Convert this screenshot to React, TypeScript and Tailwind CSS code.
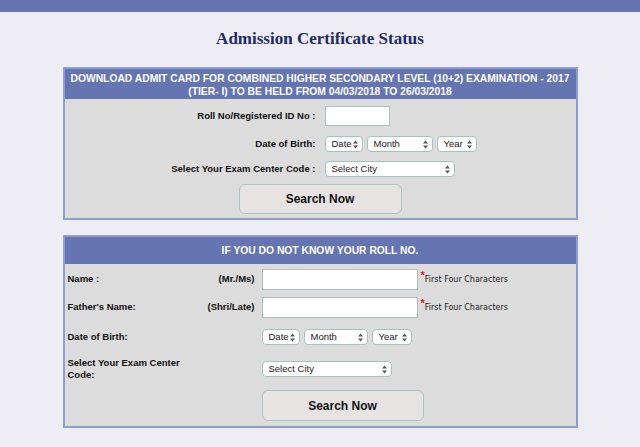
import React from "react";

function Arrows() {
  return (
    <svg width="5" height="9" viewBox="0 0 5 9" className="shrink-0">
      <polygon points="0,3.6 2.5,0.6 5,3.6" fill="#555" />
      <polygon points="0,5.4 5,5.4 2.5,8.4" fill="#555" />
    </svg>
  );
}

function Sel({ label, className }: { label: string; className: string }) {
  return (
    <div
      className={
        "flex h-[16px] items-center justify-between rounded-[4px] border border-[#a9c0c0] bg-white pl-[6px] pr-[4px] text-[9.5px] font-normal leading-none text-[#222] " +
        className
      }
    >
      <span>{label}</span>
      <Arrows />
    </div>
  );
}

function Hint() {
  return (
    <div className="ml-[3px] flex items-start self-start pt-[2px] font-normal">
      <span className="text-[11px] font-bold leading-[8px] text-[#e0141e]">*</span>
      <span className="mt-[4px] text-[8px] leading-[10px] text-[#222] [font-family:'DejaVu_Sans',Verdana,sans-serif]">
        First Four Characters
      </span>
    </div>
  );
}

export default function App() {
  return (
    <div className="min-h-[447px] w-full bg-[#ededf3] pb-[20px] text-[#111] [font-family:'Liberation_Sans',Arial,sans-serif]">
      <div className="h-[12px] bg-[#6475b2]" />
      <h1 className="mt-[17px] h-[20px] text-center text-[17px] font-bold leading-[20px] text-[#1f2a66] [font-family:'Liberation_Serif','Times_New_Roman',serif]">
        Admission Certificate Status
      </h1>

      {/* Box 1 */}
      <div className="mx-auto mt-[18px] w-[515px] border-2 border-[#8e9ed2] bg-[#dcdcdc]">
        <div className="h-[30px] bg-[#6475b2] pt-[3px] text-center text-[10.3px] font-bold leading-[13px] text-white">
          DOWNLOAD ADMIT CARD FOR COMBINED HIGHER SECONDARY LEVEL (10+2) EXAMINATION - 2017
          <br />
          (TIER- I) TO BE HELD FROM 04/03/2018 TO 26/03/2018
        </div>
        <div className="flex flex-col pb-[4px] pt-[7px] text-[9.5px] font-bold">
          <div className="flex items-center">
            <div className="w-[254px] pr-[3px] text-right">Roll No/Registered ID No :</div>
            <div className="ml-[6px] h-[20px] w-[65px] border border-[#a9c0c0] bg-white" />
          </div>
          <div className="mt-[10px] flex items-center">
            <div className="w-[254px] pr-[3px] text-right">Date of Birth:</div>
            <div className="ml-[6px] flex gap-[4px]">
              <Sel label="Date" className="w-[38px]" />
              <Sel label="Month" className="w-[66px]" />
              <Sel label="Year" className="w-[40px]" />
            </div>
          </div>
          <div className="mt-[9px] flex items-center">
            <div className="w-[254px] pr-[3px] text-right">Select Your Exam Center Code :</div>
            <div className="ml-[6px]">
              <Sel label="Select City" className="w-[130px]" />
            </div>
          </div>
          <div className="mt-[7px] flex justify-center">
            <button className="h-[30px] w-[163px] rounded-[6px] border border-[#a9c4c4] bg-[#e7e3e3] text-[12px] font-bold text-[#111]">
              Search Now
            </button>
          </div>
        </div>
      </div>

      {/* Box 2 */}
      <div className="mx-auto mt-[15px] w-[515px] border-2 border-[#8e9ed2] bg-[#dcdcdc]">
        <div className="flex h-[27px] items-center justify-center bg-[#6475b2] text-[10.3px] font-bold text-white">
          IF YOU DO NOT KNOW YOUR ROLL NO.
        </div>
        <div className="flex flex-col pb-[5px] pl-[3px] pt-[5px] text-[9.5px] font-bold">
          <div className="flex items-center">
            <div className="flex w-[187px] justify-between">
              <span>Name :</span>
              <span>(Mr./Ms)</span>
            </div>
            <div className="ml-[7px] h-[21px] w-[156px] border border-[#a9c0c0] bg-white" />
            <Hint />
          </div>
          <div className="mt-[7px] flex items-center">
            <div className="flex w-[187px] justify-between">
              <span>Father's Name:</span>
              <span>(Shri/Late)</span>
            </div>
            <div className="ml-[7px] h-[21px] w-[156px] border border-[#a9c0c0] bg-white" />
            <Hint />
          </div>
          <div className="mt-[11px] flex items-center">
            <div className="w-[187px]">Date of Birth:</div>
            <div className="ml-[7px] flex gap-[4px]">
              <Sel label="Date" className="w-[38px]" />
              <Sel label="Month" className="w-[64px]" />
              <Sel label="Year" className="w-[40px]" />
            </div>
          </div>
          <div className="mt-[12px] flex items-center">
            <div className="w-[187px]">
              <div className="w-[125px] leading-[12px]">Select Your Exam Center Code:</div>
            </div>
            <div className="ml-[7px]">
              <Sel label="Select City" className="w-[130px]" />
            </div>
          </div>
          <div className="mt-[9px] flex">
            <div className="w-[187px]" />
            <button className="ml-[7px] h-[31px] w-[162px] rounded-[6px] border border-[#a9c4c4] bg-[#e7e3e3] text-[12px] font-bold text-[#111]">
              Search Now
            </button>
          </div>
        </div>
      </div>
    </div>
  );
}
